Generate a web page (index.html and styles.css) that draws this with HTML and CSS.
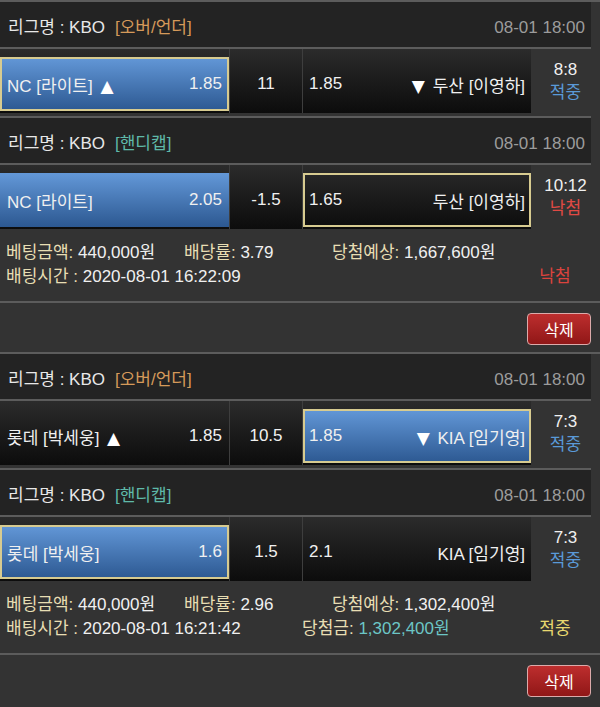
FILE: index.html
```html
<!DOCTYPE html>
<html lang="ko">
<head>
<meta charset="utf-8">
<title>베팅내역</title>
<link rel="stylesheet" href="styles.css">
</head>
<body>
<div class="page">
  <section class="bet">
    <div class="game">
      <div class="league"><span class="lname">리그명 : KBO</span><span class="type ou">[오버/언더]</span><span class="time">08-01 18:00</span></div>
      <div class="odds">
        <div class="cell home"><div class="pick win mine"><span>NC [라이트] <span class="arr">▲</span></span><span>1.85</span></div></div>
        <div class="cell line"><div class="pick center">11</div></div>
        <div class="cell away"><div class="pick"><span>1.85</span><span><span class="arr">▼</span> 두산 [이영하]</span></div></div>
        <div class="result"><span class="score">8:8</span><span class="hit">적중</span></div>
      </div>
    </div>
    <div class="game">
      <div class="league"><span class="lname">리그명 : KBO</span><span class="type hc">[핸디캡]</span><span class="time">08-01 18:00</span></div>
      <div class="odds">
        <div class="cell home"><div class="pick win"><span>NC [라이트]</span><span>2.05</span></div></div>
        <div class="cell line"><div class="pick center">-1.5</div></div>
        <div class="cell away"><div class="pick mine"><span>1.65</span><span>두산 [이영하]</span></div></div>
        <div class="result"><span class="score">10:12</span><span class="miss">낙첨</span></div>
      </div>
    </div>
    <div class="info">
      <div class="info-row">
        <span class="c1"><span class="lbl">베팅금액:</span> 440,000원</span>
        <span class="c2"><span class="lbl">배당률:</span> 3.79</span>
        <span class="c3"><span class="lbl">당첨예상:</span> 1,667,600원</span>
      </div>
      <div class="info-row">
        <span class="c1 wide"><span class="lbl">배팅시간 :</span> 2020-08-01 16:22:09</span>
        <span class="c4"></span>
        <span class="status miss">낙첨</span>
      </div>
    </div>
    <div class="actions"><button class="del" type="button">삭제</button></div>
  </section>

  <section class="bet">
    <div class="game">
      <div class="league"><span class="lname">리그명 : KBO</span><span class="type ou">[오버/언더]</span><span class="time">08-01 18:00</span></div>
      <div class="odds">
        <div class="cell home"><div class="pick"><span>롯데 [박세웅] <span class="arr">▲</span></span><span>1.85</span></div></div>
        <div class="cell line"><div class="pick center">10.5</div></div>
        <div class="cell away"><div class="pick win mine"><span>1.85</span><span><span class="arr">▼</span> KIA [임기영]</span></div></div>
        <div class="result"><span class="score">7:3</span><span class="hit">적중</span></div>
      </div>
    </div>
    <div class="game">
      <div class="league"><span class="lname">리그명 : KBO</span><span class="type hc">[핸디캡]</span><span class="time">08-01 18:00</span></div>
      <div class="odds">
        <div class="cell home"><div class="pick win mine"><span>롯데 [박세웅]</span><span>1.6</span></div></div>
        <div class="cell line"><div class="pick center">1.5</div></div>
        <div class="cell away"><div class="pick"><span>2.1</span><span>KIA [임기영]</span></div></div>
        <div class="result"><span class="score">7:3</span><span class="hit">적중</span></div>
      </div>
    </div>
    <div class="info">
      <div class="info-row">
        <span class="c1"><span class="lbl">베팅금액:</span> 440,000원</span>
        <span class="c2"><span class="lbl">배당률:</span> 2.96</span>
        <span class="c3"><span class="lbl">당첨예상:</span> 1,302,400원</span>
      </div>
      <div class="info-row">
        <span class="c1 wide"><span class="lbl">배팅시간 :</span> 2020-08-01 16:21:42</span>
        <span class="c4"><span class="lbl">당첨금:</span> <span class="won">1,302,400원</span></span>
        <span class="status win-txt">적중</span>
      </div>
    </div>
    <div class="actions"><button class="del" type="button">삭제</button></div>
  </section>
</div>
</body>
</html>
```

FILE: styles.css
```css
* { box-sizing: border-box; }

html, body {
  margin: 0;
  padding: 0;
  background: #333333;
}

body {
  font-family: "Liberation Sans", "Noto Sans CJK KR", sans-serif;
  font-size: 17px;
  color: #f0f0f0;
}

.page {
  width: 600px;
}

.bet {
  border-top: 2px solid #5c5c5c;
}

.game + .game .league {
  margin-top: 3px;
  border-top: 2px solid #5c5c5c;
}

.league {
  width: 591px;
  display: flex;
  align-items: center;
  background: #232323;
  border-bottom: 2px solid #5c5c5c;
  padding: 15px 6px 9px 8px;
  line-height: 21px;
  color: #e8e8e8;
}

.type {
  margin-left: 10px;
}

.type.ou { color: #d59a5a; }
.type.hc { color: #5fb9a9; }

.time {
  margin-left: auto;
  color: #9c9c9c;
}

.odds {
  display: flex;
  height: 64px;
}

.cell {
  height: 64px;
  padding: 8px 0 2px;
  background: linear-gradient(#2b2b2b, #0c0c0c);
}

.home {
  width: 230px;
  border-right: 1px solid #3e3e3e;
}

.line {
  width: 73px;
  border-right: 1px solid #3e3e3e;
}

.away {
  width: 228px;
}

.pick {
  height: 54px;
  display: flex;
  align-items: center;
  justify-content: space-between;
  padding: 0 7px 0 7px;
  white-space: nowrap;
}

.away .pick {
  padding: 0 6px 0 6px;
}

.pick.center {
  justify-content: center;
}

.pick.win {
  background: linear-gradient(#6398d8, #2c5891);
}

.pick.mine {
  box-shadow: inset 0 0 0 2px #d7cb90;
}

.arr {
  font-family: "DejaVu Sans", sans-serif;
  font-size: 17px;
  color: #ffffff;
}

.home .arr { margin-left: 3px; }
.away .arr { margin-right: 3px; }

.result {
  width: 69px;
  display: flex;
  flex-direction: column;
  align-items: center;
  justify-content: center;
  line-height: 23px;
  background: #333333;
}

.score { color: #f0f0f0; }
.hit { color: #5a9ad8; }
.miss { color: #e04a44; }

.info {
  padding: 12px 0 12px 6px;
  font-size: 17px;
  line-height: 24px;
}

.info-row {
  display: flex;
  white-space: nowrap;
}

.lbl { color: #e8deb3; }

.c1 { width: 178px; }
.c2 { width: 148px; }
.c1.wide { width: 296px; }
.c4 { flex: 1; }

.status {
  width: 60px;
  margin-right: 15px;
  text-align: center;
}

.status.miss { color: #db433d; }
.win-txt { color: #e9d96f; }
.won { color: #6cc6c6; }

.actions {
  display: flex;
  justify-content: flex-end;
  border-top: 2px solid #5c5c5c;
  padding: 10px 9px 7px;
}

.del {
  width: 64px;
  height: 32px;
  font-family: "Liberation Sans", "Noto Sans CJK KR", sans-serif;
  font-size: 16px;
  color: #ffffff;
  background: linear-gradient(#bd2e2e, #901717);
  border: 1px solid #dcaaaa;
  border-radius: 4px;
  padding: 0;
}
```
